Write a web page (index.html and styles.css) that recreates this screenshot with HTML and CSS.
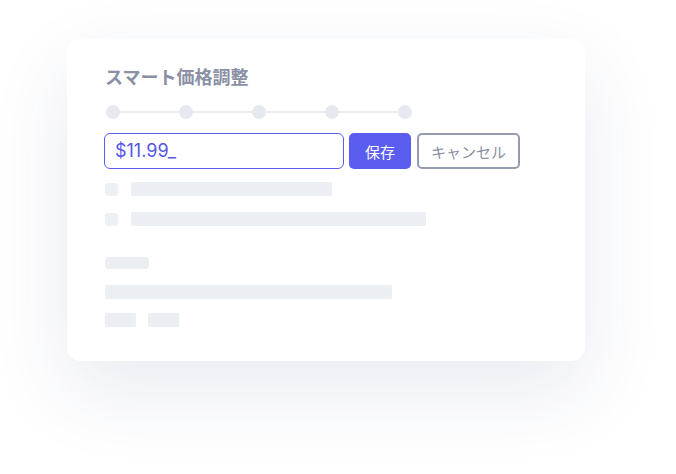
FILE: index.html
```html
<!DOCTYPE html>
<html lang="ja">
<head>
  <meta charset="UTF-8" />
  <meta name="viewport" content="width=device-width, initial-scale=1.0"/>
  <title>スマート価格調整</title>
  <link rel="stylesheet" href="styles.css">
</head>
<body>

<div class="page">
  <div class="card">
    <h2 class="title">スマート価格調整</h2>

    <div class="steps">
      <span class="dot"></span><span class="line"></span>
      <span class="dot"></span><span class="line"></span>
      <span class="dot"></span><span class="line"></span>
      <span class="dot"></span><span class="line"></span>
      <span class="dot"></span>
    </div>

    <div class="edit-row">
      <div class="price-input">$11.99_</div>
      <button class="btn-save">保存</button>
      <button class="btn-cancel">キャンセル</button>
    </div>

    <div class="list">
      <div class="list-item">
        <span class="check"></span>
        <span class="bar" style="width: 201px"></span>
      </div>
      <div class="list-item">
        <span class="check"></span>
        <span class="bar" style="width: 295px"></span>
      </div>
    </div>

    <div class="details">
      <span class="label"></span>
      <span class="bar long"></span>
      <div class="chips">
        <span class="chip"></span>
        <span class="chip"></span>
      </div>
    </div>
  </div>
</div>

</body>
</html>
```

FILE: styles.css
```css
body {
  margin: 0;
  background: #ffffff;
  font-family: 'Noto Sans', 'Noto Sans CJK JP', sans-serif;
}

.page {
  box-sizing: border-box;
  height: 474px;
  padding: 39px 0 0 67px;
  overflow: hidden;
}

.card {
  box-sizing: border-box;
  width: 518px;
  height: 322px;
  padding: 24px 38px 34px 37px;
  background: #ffffff;
  border-radius: 14px;
  box-shadow: 0 30px 80px rgba(40, 60, 130, 0.1);
}

.title {
  margin: 0;
  padding-left: 1px;
  font-family: 'Noto Sans CJK JP', sans-serif;
  font-size: 18px;
  line-height: 26px;
  font-weight: 700;
  color: #8a90a5;
}

.steps {
  display: flex;
  align-items: center;
  margin-top: 16px;
  margin-left: 2px;
}

.dot {
  width: 14px;
  height: 14px;
  border-radius: 50%;
  background: #e6e9ef;
}

.line {
  width: 59px;
  height: 2px;
  background: #e9ecf1;
}

.edit-row {
  display: flex;
  gap: 5px;
  margin-top: 14px;
  height: 36px;
}

.price-input {
  box-sizing: border-box;
  width: 240px;
  height: 36px;
  padding: 0 10px;
  border: 1px solid #5b5ce8;
  border-radius: 6px;
  font-family: 'Inter', sans-serif;
  font-size: 18px;
  line-height: 34px;
  color: #5557e6;
}

.btn-save {
  padding: 0 16px;
  border: none;
  border-radius: 5px;
  background: #5b5cf0;
  color: #ffffff;
  font-family: 'Noto Sans CJK JP', sans-serif;
  font-size: 15px;
}

.btn-cancel {
  margin-left: 1px;
  padding: 0 12px;
  border: 2px solid #959bb0;
  border-radius: 5px;
  background: #ffffff;
  color: #8a90a3;
  font-family: 'Noto Sans CJK JP', sans-serif;
  font-size: 15px;
}

.list {
  display: flex;
  flex-direction: column;
  gap: 16px;
  margin-top: 13px;
}

.list-item {
  display: flex;
  align-items: center;
  gap: 13px;
  padding-left: 1px;
}

.check {
  width: 13px;
  height: 13px;
  border-radius: 3px;
  background: #edf0f4;
}

.bar {
  display: block;
  height: 14px;
  border-radius: 2px;
  background: #ebeef2;
}

.details {
  display: flex;
  flex-direction: column;
  align-items: flex-start;
  margin-top: 31px;
  padding-left: 1px;
}

.label {
  width: 44px;
  height: 12px;
  border-radius: 4px;
  background: #ebeef2;
}

.bar.long {
  width: 287px;
  margin-top: 16px;
}

.chips {
  display: flex;
  gap: 12px;
  margin-top: 14px;
}

.chip {
  width: 31px;
  height: 14px;
  border-radius: 2px;
  background: #ebeef2;
}
```
